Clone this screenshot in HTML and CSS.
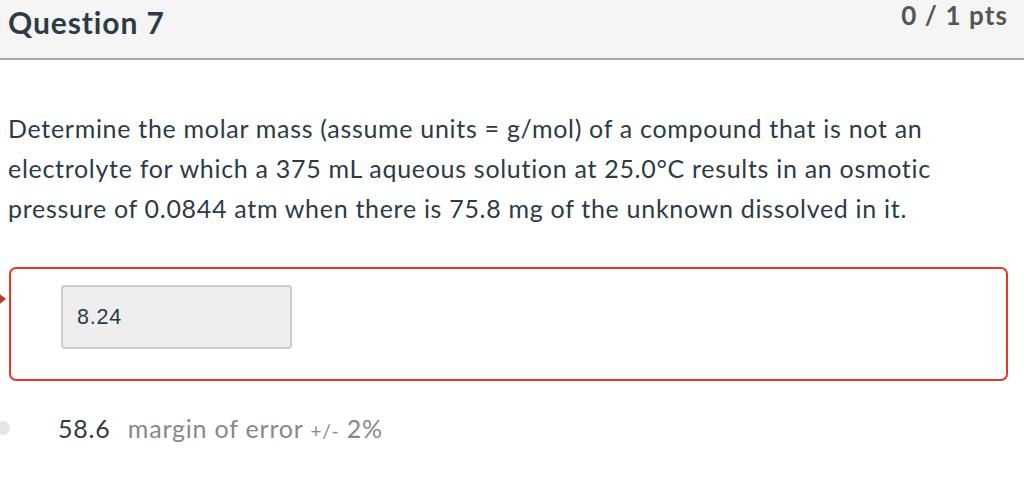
FILE: index.html
```html
<!DOCTYPE html>
<html>
<head>
<meta charset="utf-8">
<link rel="stylesheet" href="styles.css">
</head>
<body>
<div class="page">
  <div class="header">
    <h2 class="title">Question 7</h2>
    <div class="pts">0 / 1 pts</div>
  </div>
  <div class="content">
    <p class="text">Determine the molar mass (assume units = g/mol) of a compound that is not an electrolyte for which a 375 mL aqueous solution at 25.0°C results in an osmotic pressure of 0.0844 atm when there is 75.8 mg of the unknown dissolved in it.</p>
    <div class="answer-wrap">
      <span class="arrow"></span>
      <div class="answer">
        <div class="input">8.24</div>
      </div>
    </div>
    <div class="correct">
      <span class="dot"></span>
      <span class="val">58.6</span>
      <span class="moe">margin of error <span class="pm">+/-</span> 2%</span>
    </div>
  </div>
</div>
</body>
</html>
```
FILE: styles.css
```css
html, body {
  margin: 0;
  padding: 0;
  background: #fff;
}
body {
  font-family: Lato, "Noto Sans", sans-serif;
  color: #2d3b45;
  width: 1024px;
  height: 484px;
  overflow: hidden;
}
.page {
  display: flex;
  flex-direction: column;
}
.header {
  display: flex;
  justify-content: space-between;
  align-items: flex-start;
  background: #f5f5f5;
  height: 58px;
  border-bottom: 2px solid #a9a9a9;
  padding: 0 16px 0 8px;
}
.title {
  margin: 0;
  font-size: 30px;
  font-weight: 700;
  letter-spacing: 0.9px;
  line-height: 44px;
  color: #2d3b45;
}
.pts {
  font-size: 26px;
  font-weight: 700;
  letter-spacing: 1.1px;
  line-height: 30px;
  color: #555;
}
.content {
  padding: 0 16px 0 8px;
}
.text {
  margin: 48px 0 0 0;
  font-size: 25px;
  letter-spacing: 0.7px;
  line-height: 40px;
}
.answer-wrap {
  position: relative;
  margin-top: 39px;
}
.arrow {
  position: absolute;
  left: -12px;
  top: 24px;
  width: 0;
  height: 0;
  border-top: 8px solid transparent;
  border-bottom: 8px solid transparent;
  border-left: 10px solid #b73a2e;
}
.answer {
  margin-left: 1px;
  border: 2px solid #e8352b;
  border-radius: 7px;
  height: 114px;
  box-sizing: border-box;
  padding: 16px 0 0 50px;
}
.input {
  width: 231px;
  height: 64px;
  box-sizing: border-box;
  background: #eeeeee;
  border: 2px solid #cccccc;
  border-radius: 4px;
  font-family: "Liberation Sans", Arial, sans-serif;
  font-size: 21.5px;
  letter-spacing: 0.8px;
  line-height: 60px;
  padding-left: 14px;
  color: #2d3b45;
}
.correct {
  position: relative;
  margin-top: 32px;
  padding-left: 50px;
  font-size: 25px;
  letter-spacing: 0.8px;
  line-height: 30px;
}
.dot {
  position: absolute;
  left: -12px;
  top: 8px;
  width: 14px;
  height: 14px;
  border-radius: 50%;
  background: #e6e6e6;
}
.val {
  color: #2d3b45;
  margin-right: 10px;
}
.moe {
  color: #888;
}
.pm {
  font-size: 19px;
}
```
